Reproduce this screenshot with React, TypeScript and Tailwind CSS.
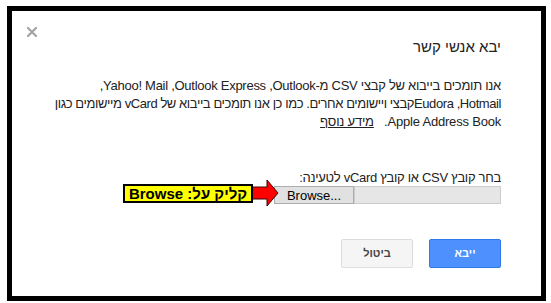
import React from "react";

const RLM = "\u200F";

const CloseIcon = () => (
  <svg width="10" height="10" viewBox="0 0 10 10" className="block">
    <path d="M1 1 L9 9 M9 1 L1 9" stroke="#a3a3a3" strokeWidth="2.2" strokeLinecap="square" />
  </svg>
);

const RedArrow = () => (
  <svg width="27" height="28" viewBox="0 0 27 28" className="block shrink-0">
    <polygon
      points="0.5,8 15,8 15,1 26,14 15,27 15,20 0.5,20"
      fill="#ff0000"
      stroke="#3a0000"
      strokeWidth="1"
    />
  </svg>
);

const FileRow = () => {
  return (
    <div className="flex items-center h-[18px]">
      <div className="w-[147px] h-[18px] bg-[#e6e6e6] border border-[#cccccc]" />
      <button
        dir="ltr"
        className="w-[80px] h-[18px] bg-[#e1e1e1] border border-[#adadad] text-[13px] leading-none text-black flex items-center justify-center"
      >
        Browse...
      </button>
      <div className="flex items-center -mr-[5px] -mt-[4px] relative">
        <RedArrow />
        <div className="h-[19px] w-[130px] -mr-[1px] bg-[#ffff00] border-2 border-black flex items-center justify-center text-[15px] font-bold leading-none text-black whitespace-nowrap">
          קליק על: Browse
        </div>
      </div>
    </div>
  );
};

export default function App() {
  return (
    <div className="w-[551px] h-[303px] bg-white pt-[6px] pl-[7px] font-['Liberation_Sans',Arial,sans-serif]">
      <div className="w-[539px] h-[295px] border-[5px] border-black bg-white relative" dir="rtl">
        <div className="absolute left-[15px] top-[16px]">
          <CloseIcon />
        </div>
        <div className="pr-[40px] pl-[40px] pt-[26px] text-[#222222]">
          <h1 className="text-[15px] leading-[20px] font-normal">יבא אנשי קשר</h1>
          <p className="mt-[20px] text-[13px] leading-[18px] whitespace-nowrap">
            <span className="tracking-[-0.27px]">
              {`אנו תומכים בייבוא של קבצי CSV מ-Outlook,${RLM} Outlook Express,${RLM} Yahoo! Mail,${RLM}`}
            </span>
            <br />
            <span className="tracking-[-0.42px]">
              {`Hotmail,${RLM} Eudora${RLM}קבצי ויישומים אחרים. כמו כן אנו תומכים בייבוא של vCard מיישומים כגון`}
            </span>
            <br />
            <span className="tracking-[-0.2px]">
              {"Apple Address Book.\u00A0\u00A0 "}
              <a className="underline text-[#222222]">מידע נוסף</a>
            </span>
          </p>
          <div className="mt-[39px] text-[13px] leading-[16px] tracking-[-0.3px]">
            בחר קובץ CSV או קובץ vCard לטעינה:
          </div>
          <FileRow />
          <div className="mt-[35px] flex gap-[16px]">
            <button className="w-[72px] h-[29px] rounded-[2px] bg-[#4d90fe] border border-[#3079ed] text-white text-[11px] font-bold">
              ייבא
            </button>
            <button className="w-[72px] h-[29px] rounded-[2px] bg-[#f5f5f5] border border-[#dcdcdc] text-[#444444] text-[11px] font-bold">
              ביטול
            </button>
          </div>
        </div>
      </div>
    </div>
  );
}
